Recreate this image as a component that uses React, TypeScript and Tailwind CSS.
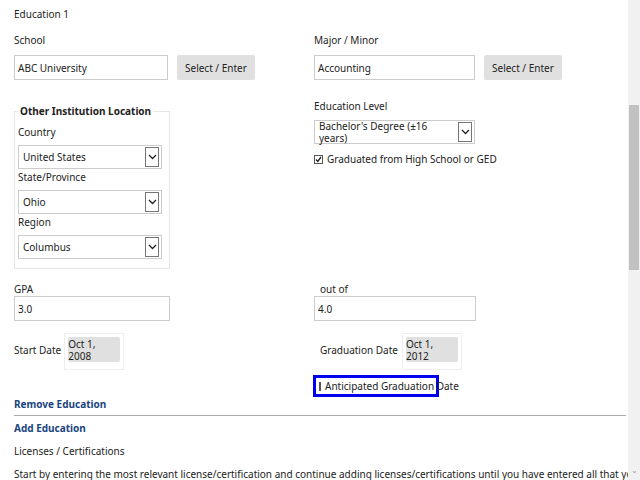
const Chevron = () => (
  <span className="flex h-[20px] w-[14px] items-center justify-center border border-[#767676] bg-white">
    <svg width="9" height="6" viewBox="0 0 9 6"><path d="M1 1l3.5 3.5L8 1" fill="none" stroke="#222" strokeWidth="1.3" /></svg>
  </span>
);

function Select({ value, w }: { value: string; w: string }) {
  return (
    <div className={`flex h-[24px] ${w} items-center justify-between border border-[#ccc] bg-white pl-[4px] pr-[2px]`}>
      <span>{value}</span>
      <Chevron />
    </div>
  );
}

function TextInput({ value, w }: { value: string; w: string }) {
  return (
    <div className={`flex h-[25px] ${w} items-center border border-[#ccc] bg-white pl-[3px]`}>{value}</div>
  );
}

const GrayBtn = ({ children }: { children: React.ReactNode }) => (
  <div className="flex h-[25px] items-center rounded-[2px] bg-[#e0e0e0] px-[8px]">{children}</div>
);

function DateBox({ value }: { value: string }) {
  return (
    <div className="border border-[#eee] p-[3px] pb-[7px]">
      <div className="flex h-[25px] w-[52px] items-center justify-center rounded-[2px] bg-[#e0e0e0]">{value}</div>
    </div>
  );
}

export default function App() {
  return (
    <div className="flex h-[480px] w-[640px] overflow-hidden bg-white font-['Liberation_Serif',serif] text-[10px] leading-[12px] text-[#222]">
      <div className="w-[628px] pl-[14px] pt-[8px]">
        <div className="h-[26px]">Education 1</div>
        <div className="flex">
          <div className="w-[300px]">
            <div className="h-[21px]">School</div>
            <div className="flex gap-[9px]">
              <TextInput value="ABC University" w="w-[154px]" />
              <GrayBtn>Select / Enter</GrayBtn>
            </div>
            <div className="relative mt-[31px] h-[158px] w-[156px] border border-[#e6e6e6] px-[3px]">
              <div className="absolute -top-[7px] left-[3px] bg-white px-[2px] font-bold">Other Institution Location</div>
              <div className="pt-[14px] pb-[7px]">Country</div>
              <Select value="United States" w="w-[144px]" />
              <div className="pt-[2px] pb-[7px]">State/Province</div>
              <Select value="Ohio" w="w-[144px]" />
              <div className="pt-[2px] pb-[7px]">Region</div>
              <Select value="Columbus" w="w-[144px]" />
            </div>
          </div>
          <div className="w-[300px]">
            <div className="h-[21px]">Major / Minor</div>
            <div className="flex gap-[9px]">
              <TextInput value="Accounting" w="w-[161px]" />
              <GrayBtn>Select / Enter</GrayBtn>
            </div>
            <div className="pt-[20px] pb-[8px]">Education Level</div>
            <Select value="Bachelor's Degree (±16 years)" w="w-[161px]" />
            <div className="mt-[9px] flex items-center gap-[4px]">
              <span className="flex h-[9px] w-[9px] items-center justify-center border border-[#555]">
                <svg width="7" height="7" viewBox="0 0 7 7"><path d="M1 3.5l1.8 2L6 1" fill="none" stroke="#222" strokeWidth="1.3" /></svg>
              </span>
              Graduated from High School or GED
            </div>
          </div>
        </div>
        <div className="mt-[14px] flex">
          <div className="w-[300px]">
            <div className="h-[13px]">GPA</div>
            <TextInput value="3.0" w="w-[156px]" />
          </div>
          <div className="w-[300px]">
            <div className="h-[13px] pl-[6px]">out of</div>
            <TextInput value="4.0" w="w-[162px]" />
          </div>
        </div>
        <div className="mt-[12px] flex">
          <div className="flex w-[300px] items-start gap-[3px]">
            <span className="pt-[11px]">Start Date</span>
            <DateBox value="Oct 1, 2008" />
          </div>
          <div>
            <div className="flex items-start gap-[4px] pl-[6px]">
              <span className="pt-[11px]">Graduation Date</span>
              <DateBox value="Oct 1, 2012" />
            </div>
            <div className="mt-[5px] -ml-[1px] flex h-[22px] w-[126px] items-center gap-[4px] whitespace-nowrap border-[3px] border-[#0000ee] pl-[3px]">
              <span className="h-[9px] w-[9px] border border-[#555]" />
              Anticipated Graduation Date
            </div>
          </div>
        </div>
        <div className="mt-[1px] font-bold text-[#1a4480]">Remove Education</div>
        <div className="mt-[5px] mr-[2px] border-t border-[#aaa]" />
        <div className="mt-[6px] font-bold text-[#1a4480]">Add Education</div>
        <div className="mt-[11px]">Licenses / Certifications</div>
        <div className="mt-[11px] whitespace-nowrap">Start by entering the most relevant license/certification and continue adding licenses/certifications until you have entered all that you feel are important to disclose for this job.</div>
      </div>
      <div className="flex w-[12px] flex-col bg-[#f1f1f1]">
        <div className="h-[105px]" />
        <div className="mx-[1px] h-[165px] bg-[#c1c1c1]" />
        <div className="flex-1" />
        <div className="pb-[4px] text-center text-[8px] text-[#999]">⌄</div>
      </div>
    </div>
  );
}
